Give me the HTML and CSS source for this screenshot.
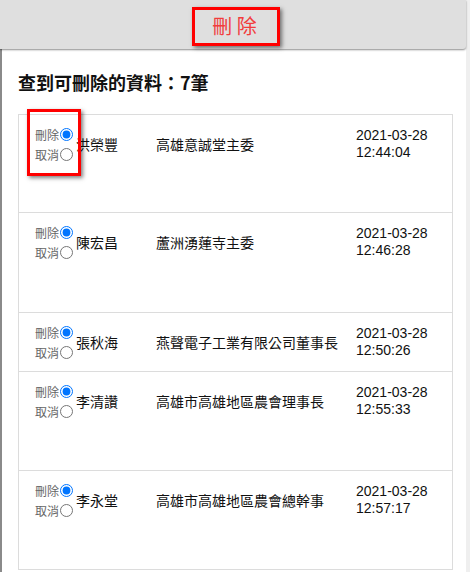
FILE: index.html
```html
<!DOCTYPE html>
<html lang="zh-Hant">
<head>
<meta charset="utf-8">
<title>刪除</title>
<link rel="stylesheet" href="styles.css">
</head>
<body>
<div class="page">
  <div class="main">
    <header class="topbar"><span class="del-btn">刪 除</span></header>
    <div class="content">
      <h2 class="count">查到可刪除的資料：7筆</h2>
      <div class="table">
        <div class="row first">
          <div class="pick">
            <div class="opts">
              <label class="opt">刪除<input type="radio" name="r1" checked></label>
              <label class="opt">取消<input type="radio" name="r1"></label>
            </div>
            <span class="name">洪榮豐</span>
          </div>
          <div class="job">高雄意誠堂主委</div>
          <div class="time"><span class="line">2021-03-28</span><span class="line">12:44:04</span></div>
        </div>
        <div class="row second">
          <div class="pick">
            <div class="opts">
              <label class="opt">刪除<input type="radio" name="r2" checked></label>
              <label class="opt">取消<input type="radio" name="r2"></label>
            </div>
            <span class="name">陳宏昌</span>
          </div>
          <div class="job">蘆洲湧蓮寺主委</div>
          <div class="time"><span class="line">2021-03-28</span><span class="line">12:46:28</span></div>
        </div>
        <div class="row short">
          <div class="pick">
            <div class="opts">
              <label class="opt">刪除<input type="radio" name="r3" checked></label>
              <label class="opt">取消<input type="radio" name="r3"></label>
            </div>
            <span class="name">張秋海</span>
          </div>
          <div class="job">燕聲電子工業有限公司董事長</div>
          <div class="time"><span class="line">2021-03-28</span><span class="line">12:50:26</span></div>
        </div>
        <div class="row">
          <div class="pick">
            <div class="opts">
              <label class="opt">刪除<input type="radio" name="r4" checked></label>
              <label class="opt">取消<input type="radio" name="r4"></label>
            </div>
            <span class="name">李清讚</span>
          </div>
          <div class="job">高雄市高雄地區農會理事長</div>
          <div class="time"><span class="line">2021-03-28</span><span class="line">12:55:33</span></div>
        </div>
        <div class="row">
          <div class="pick">
            <div class="opts">
              <label class="opt">刪除<input type="radio" name="r5" checked></label>
              <label class="opt">取消<input type="radio" name="r5"></label>
            </div>
            <span class="name">李永堂</span>
          </div>
          <div class="job">高雄市高雄地區農會總幹事</div>
          <div class="time"><span class="line">2021-03-28</span><span class="line">12:57:17</span></div>
        </div>
      </div>
    </div>
  </div>
  <div class="rail"></div>
  <div class="mark mark-btn"></div>
  <div class="mark mark-radio"></div>
</div>
</body>
</html>
```

FILE: styles.css
```css
html, body {
  margin: 0;
  padding: 0;
  background: #fff;
  font-family: "Noto Sans CJK TC", "Noto Sans", sans-serif;
  color: #222;
}

.page {
  position: relative;
  display: flex;
  min-height: 572px;
  overflow: hidden;
}

.main {
  flex: 1;
  display: flex;
  flex-direction: column;
}

.rail {
  width: 4px;
  background: #efefef;
}

.topbar {
  height: 49px;
  background: #dfdfdf;
  border-bottom-right-radius: 3px;
  box-shadow: 0 1px 2px rgba(0, 0, 0, 0.45);
  display: flex;
  align-items: center;
  justify-content: center;
  position: relative;
  z-index: 1;
}

.del-btn {
  color: #f23c3c;
  font-size: 20px;
  line-height: 24px;
  margin-top: 2px;
  margin-left: 3px;
}

.content {
  flex: 1;
  border-left: 2px solid #8a8a8a;
  padding: 0 13px 0 16px;
}

.count {
  margin: 21px 0 20px;
  font-size: 18px;
  line-height: 24px;
  font-weight: 700;
  color: #111;
}

.table {
  border: 1px solid #dcdcdc;
  border-top: none;
}

.row {
  box-sizing: border-box;
  height: 99px;
  border-top: 1px solid #dcdcdc;
  padding: 9px 0 0 16px;
  display: grid;
  grid-template-columns: 121px 200px 1fr;
  align-items: start;
}

.row.first { height: 98px; }
.row.second { height: 100px; }
.row.short { height: 59px; }

.pick {
  display: flex;
  align-items: center;
}

.opts {
  display: flex;
  flex-direction: column;
}

.opt {
  display: flex;
  align-items: center;
  height: 20px;
  font-size: 12px;
  color: #666;
}

.opt input {
  width: 13px;
  height: 13px;
  margin: 0 3px 0 1px;
}

.name {
  font-size: 14px;
  line-height: 20px;
  color: #111;
}

.job {
  height: 40px;
  display: flex;
  align-items: center;
  font-size: 14px;
  color: #111;
}

.time {
  margin-top: 3px;
  display: flex;
  flex-direction: column;
  font-family: "Liberation Sans", Arial, sans-serif;
  font-size: 14px;
  color: #111;
}

.time .line {
  display: block;
  line-height: 17px;
}

.mark {
  position: absolute;
  box-sizing: border-box;
  border: 3px solid #ff0000;
  box-shadow: 2px 2px 4px rgba(0, 0, 0, 0.5);
  z-index: 2;
}

.mark-btn {
  left: 192px;
  top: 7px;
  width: 88px;
  height: 39px;
}

.mark-radio {
  left: 27px;
  top: 109px;
  width: 54px;
  height: 67px;
}
```
